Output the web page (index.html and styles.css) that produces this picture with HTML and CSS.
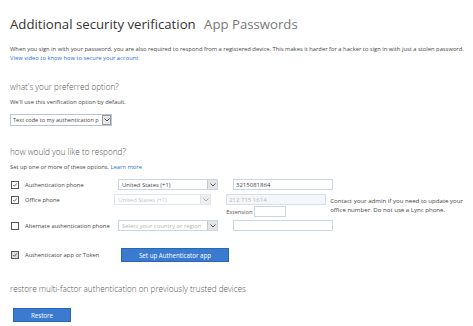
FILE: index.html
```html
<!DOCTYPE html>
<html lang="en">

<head>
  <meta charset="UTF-8" />
  <meta name="viewport" content="width=device-width, initial-scale=1.0" />
  <title>Additional security verification</title>
  <link rel="stylesheet" href="styles.css">
</head>

<body>
  <div class="page">
    <h1 class="title">Additional security verification <span class="tab">App Passwords</span></h1>

    <p class="intro">When you sign in with your password, you are also required to respond from a registered device. This makes it harder for a hacker to sign in with just a stolen password.<br />
      <a href="#" class="link">View video to know how to secure your account</a></p>

    <h2 class="heading first">what's your preferred option?</h2>
    <p class="note">We'll use this verification option by default.</p>
    <div class="select pref">
      <span class="select-text">Text code to my authentication p</span>
      <span class="arrow"><svg width="6" height="4" viewBox="0 0 6 4"><path d="M0.5 0.5 L3 3 L5.5 0.5" fill="none" stroke="#444" stroke-width="1" /></svg></span>
    </div>

    <h2 class="heading">how would you like to respond?</h2>
    <p class="note">Set up one or more of these options. <a href="#" class="link">Learn more</a></p>

    <div class="options">
      <div class="row">
        <label class="check"><span class="box on"><svg width="8" height="8" viewBox="0 0 8 8"><path d="M1.5 4 L3.2 5.7 L6.6 1.8" fill="none" stroke="#333" stroke-width="1" /></svg></span>Authentication phone</label>
        <div class="select">
          <span class="select-text">United States (+1)</span>
          <span class="arrow"><svg width="6" height="4" viewBox="0 0 6 4"><path d="M0.5 0.5 L3 3 L5.5 0.5" fill="none" stroke="#555" stroke-width="1" /></svg></span>
        </div>
        <input class="input" type="text" value="3215081864" />
      </div>

      <div class="row office">
        <label class="check"><span class="box on"><svg width="8" height="8" viewBox="0 0 8 8"><path d="M1.5 4 L3.2 5.7 L6.6 1.8" fill="none" stroke="#333" stroke-width="1" /></svg></span>Office phone</label>
        <div class="select disabled">
          <span class="select-text">United States (+1)</span>
          <span class="arrow"><svg width="6" height="4" viewBox="0 0 6 4"><path d="M0.5 0.5 L3 3 L5.5 0.5" fill="none" stroke="#aaa" stroke-width="1" /></svg></span>
        </div>
        <div class="office-fields">
          <input class="input disabled" type="text" value="212 715 1614" disabled />
          <div class="ext">
            <span>Extension</span>
            <input class="input small" type="text" />
          </div>
        </div>
        <p class="admin">Contact your admin if you need to update your<br />office number. Do not use a Lync phone.</p>
      </div>

      <div class="row">
        <label class="check"><span class="box"></span>Alternate authentication phone</label>
        <div class="select">
          <span class="select-text placeholder">Select your country or region</span>
          <span class="arrow"><svg width="6" height="4" viewBox="0 0 6 4"><path d="M0.5 0.5 L3 3 L5.5 0.5" fill="none" stroke="#555" stroke-width="1" /></svg></span>
        </div>
        <input class="input" type="text" />
      </div>

      <div class="row app">
        <label class="check"><span class="box on grey"><svg width="8" height="8" viewBox="0 0 8 8"><path d="M1.5 4 L3.2 5.7 L6.6 1.8" fill="none" stroke="#333" stroke-width="1" /></svg></span>Authenticator app or Token</label>
        <button class="btn setup">Set up Authenticator app</button>
      </div>
    </div>

    <h2 class="heading restore-title">restore multi-factor authentication on previously trusted devices</h2>
    <button class="btn restore">Restore</button>
  </div>
</body>

</html>
```

FILE: styles.css
```css
body {
  margin: 0;
  padding: 0;
  background-color: #fff;
  color: #444;
  font-family: "Open Sans", "Liberation Sans", sans-serif;
}

.page {
  padding: 14px 10px 0 10px;
}

.title {
  margin: 0;
  font-size: 13.2px;
  font-weight: 400;
  color: #333;
  line-height: 20px;
  white-space: nowrap;
}

.tab {
  margin-left: 5px;
  color: #777;
}

.intro {
  margin: 11px 0 0 0;
  font-size: 5.8px;
  line-height: 9px;
  color: #444;
  white-space: nowrap;
}

.link {
  color: #1e6fd0;
  text-decoration: none;
}

.heading {
  margin: 0;
  font-size: 8.2px;
  font-weight: 300;
  color: #555;
  line-height: 12px;
}

.heading.first {
  margin-top: 18px;
}

.note {
  margin: 5px 0 0 0;
  font-size: 5.8px;
  line-height: 9px;
}

.select {
  display: flex;
  align-items: center;
  justify-content: space-between;
  width: 100px;
  height: 11px;
  border: 1px solid #c9d6e5;
  box-sizing: border-box;
  padding-left: 3px;
  font-size: 5.9px;
  color: #444;
  background-color: #fff;
}

.select.pref {
  width: 102px;
  height: 12px;
  margin: 7px 0 20px 0;
  border-color: #b8c4d2;
  padding-left: 2px;
}

.select-text {
  white-space: nowrap;
  overflow: hidden;
}

.pref .select-text {
  font-size: 5.6px;
}

.placeholder {
  color: #b5b5b5;
}

.arrow {
  display: flex;
  flex-shrink: 0;
  align-items: center;
  justify-content: center;
  width: 10px;
  height: 100%;
  background-color: #e4e4e4;
  border-left: 1px solid #c9c9c9;
  box-sizing: border-box;
}

.pref .arrow {
  width: 9px;
  background-color: #e8e8e8;
  border: 1px solid #999;
}

.select.disabled {
  color: #c4c4c4;
  border-color: #e0e6ee;
}

.select.disabled .arrow {
  background-color: #eeeeee;
  border-left-color: #e2e2e2;
}

.options {
  margin-top: 7px;
}

.row {
  display: flex;
  align-items: flex-start;
  margin-bottom: 4px;
}

.check {
  display: flex;
  align-items: center;
  width: 108px;
  height: 11px;
  font-size: 5.8px;
  color: #444;
  white-space: nowrap;
}

.box {
  display: inline-flex;
  width: 8px;
  height: 8px;
  border: 1px solid #555;
  box-sizing: border-box;
  margin: 0 6px 0 1px;
  align-items: center;
  justify-content: center;
}

.box svg {
  display: block;
}

.box.grey {
  background-color: #ddd;
}

.input {
  width: 100px;
  height: 11px;
  margin: 0 0 0 15px;
  padding: 0 0 0 2px;
  border: 1px solid #c9d6e5;
  box-sizing: border-box;
  font-family: "Open Sans", "Liberation Sans", sans-serif;
  font-size: 6px;
  color: #444;
  outline: none;
}

.input.disabled {
  background-color: #f3f6fa;
  color: #b8b8b8;
  border-color: #d6e0ea;
}

.office-fields {
  display: flex;
  flex-direction: column;
}

.ext {
  display: flex;
  align-items: center;
  margin: 1px 0 0 15px;
  font-size: 5.8px;
  color: #555;
}

.input.small {
  width: 32px;
  height: 11px;
  margin-left: 1px;
}

.admin {
  margin: 2px 0 0 4px;
  font-size: 6.1px;
  line-height: 9px;
  color: #444;
  white-space: nowrap;
}

.row.office {
  margin-bottom: 3px;
}

.row.app {
  align-items: center;
  margin-top: 17px;
}

.btn {
  border: 1px solid #2a66b8;
  background-color: #3a7bd0;
  color: #fff;
  font-family: "Open Sans", "Liberation Sans", sans-serif;
  font-size: 6.2px;
  padding: 0;
  cursor: pointer;
}

.setup {
  width: 108px;
  height: 14px;
  margin-left: 3px;
}

.restore-title {
  margin-top: 21px;
}

.restore {
  width: 58px;
  height: 14px;
  margin: 13px 0 0 3px;
}
```
